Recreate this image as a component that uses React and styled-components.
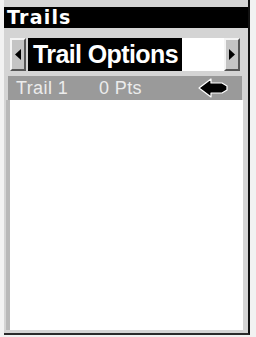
import React from "react";
import styled, { createGlobalStyle } from "styled-components";

const GlobalStyle = createGlobalStyle`
  html, body {
    margin: 0;
    padding: 0;
    background: #f2f2f2;
  }
  body {
    font-family: "Liberation Sans", Arial, sans-serif;
  }
`;

const Frame = styled.div`
  margin-left: 4px;
  width: 246px;
  height: 335px;
  padding-top: 7px;
  box-sizing: border-box;
  background: #d4d4d4;
  border-right: 2px solid #111;
  border-bottom: 2px solid #2a2a2a;
  display: flex;
  flex-direction: column;
`;

const TitleBar = styled.div`
  height: 21px;
  background: #000;
  color: #fff;
  font-family: "DejaVu Sans", sans-serif;
  font-weight: 700;
  font-size: 19px;
  letter-spacing: 1.2px;
  line-height: 21px;
  padding-left: 3px;
`;

const OptionRow = styled.div`
  margin-top: 10px;
  height: 33px;
  display: flex;
  padding: 0 8px 0 6px;
`;

const ArrowButton = styled.div`
  width: 16px;
  box-sizing: border-box;
  background: #c4c4c4;
  border-top: 2px solid #f4f4f4;
  border-left: 2px solid #f4f4f4;
  border-bottom: 2px solid #555;
  border-right: 2px solid #555;
  display: flex;
  align-items: center;
  justify-content: center;
`;

const Field = styled.div`
  flex: 1;
  margin-left: 2px;
  background: #fff;
  display: flex;
`;

const Selected = styled.div`
  width: 154px;
  background: #000;
  color: #fff;
  font-weight: 700;
  font-size: 25px;
  letter-spacing: -0.6px;
  line-height: 33px;
  padding-left: 5px;
  box-sizing: border-box;
  white-space: nowrap;
`;

const TrailRow = styled.div`
  margin: 5px 6px 0 4px;
  height: 24px;
  background: #9a9a9a;
  color: #ececec;
  font-size: 18px;
  letter-spacing: 0.4px;
  display: flex;
  align-items: center;
  padding-left: 8px;
`;

const Cell = styled.span`
  width: ${(p) => p.w}px;
  white-space: nowrap;
`;

const Pointer = styled.svg`
  margin-left: auto;
  margin-right: 14px;
  display: block;
`;

const List = styled.div`
  margin: 0 5px 0 6px;
  height: 230px;
  background: #fff;
  box-shadow: -4px 0 0 #b8b8b8;
`;

const Tri = ({ dir }) => (
  <svg width="6" height="11" viewBox="0 0 6 11">
    {dir === "left" ? (
      <polygon points="6,0 6,11 0,5.5" fill="#000" />
    ) : (
      <polygon points="0,0 0,11 6,5.5" fill="#000" />
    )}
  </svg>
);

export default function App() {
  return (
    <>
      <GlobalStyle />
      <Frame>
        <TitleBar>Trails</TitleBar>
        <OptionRow>
          <ArrowButton>
            <Tri dir="left" />
          </ArrowButton>
          <Field>
            <Selected>Trail Options</Selected>
          </Field>
          <ArrowButton>
            <Tri dir="right" />
          </ArrowButton>
        </OptionRow>
        <TrailRow>
          <Cell w={83}>Trail 1</Cell>
          <Cell w={60}>0 Pts</Cell>
          <Pointer width="30" height="20" viewBox="0 0 30 20">
            <polygon
              points="1,10 13,1 13,5 24,5 29,8 29,12 24,15 13,15 13,19"
              fill="#000"
              stroke="#fff"
              strokeWidth="1.2"
              strokeLinejoin="round"
            />
          </Pointer>
        </TrailRow>
        <List />
      </Frame>
    </>
  );
}
